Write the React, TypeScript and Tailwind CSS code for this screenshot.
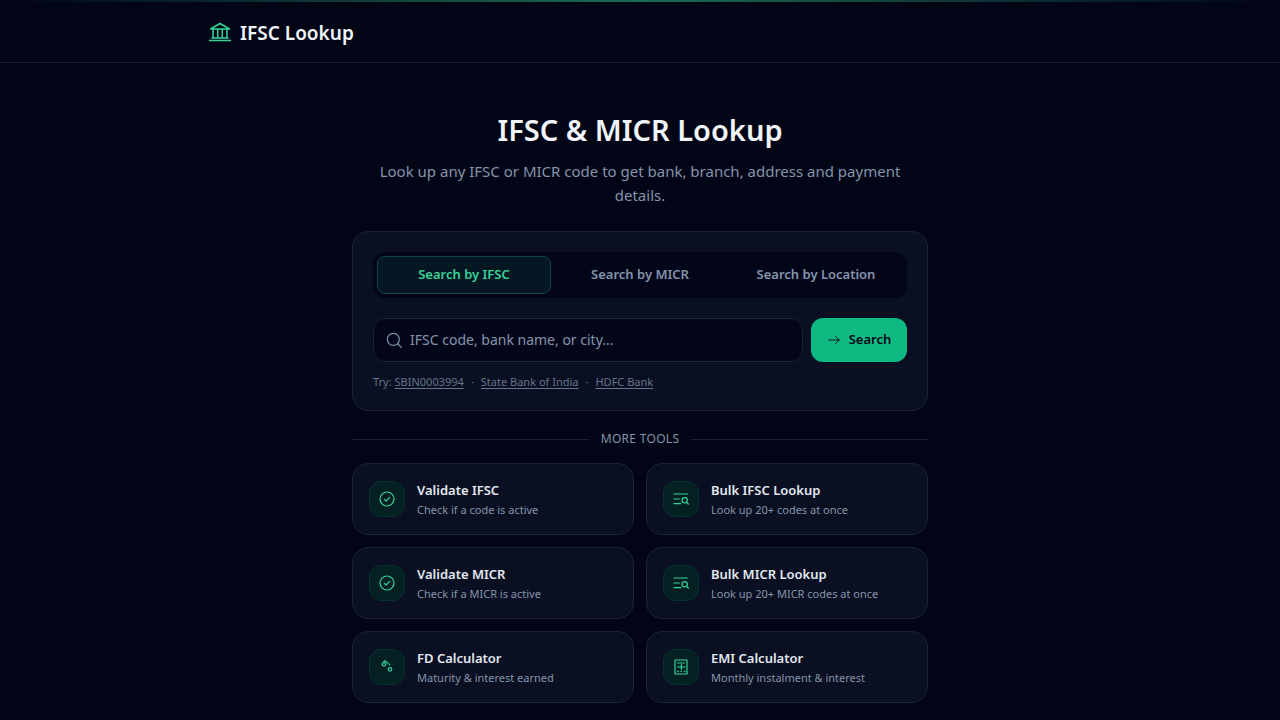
import type { ReactNode } from "react";
import { useState } from "react";

function Icon({ className, width = 1.5, children }: { className: string; width?: number; children: ReactNode }) {
  return (
    <svg
      viewBox="0 0 24 24"
      fill="none"
      stroke="currentColor"
      strokeWidth={width}
      strokeLinecap="round"
      strokeLinejoin="round"
      aria-hidden="true"
      className={className}
    >
      {children}
    </svg>
  );
}

const BankIcon = () => (
  <Icon className="size-6 shrink-0 text-[#34d399]">
    <path d="M2.5 8 12 2.500l9.500 5.500H2.500ZM5 8v9M9.700 8v9M14.300 8v9M19 8v9M4 17h16M1.500 19.500h21" />
  </Icon>
);

const CheckIcon = () => (
  <Icon className="size-4" width={1.8}>
    <circle cx="12" cy="12" r="10.500" />
    <path d="m8 12.500 2.700 2.500L16 9.500" />
  </Icon>
);

const ListSearchIcon = () => (
  <Icon className="size-4" width={1.8}>
    <path d="M1.500 4.500h20M1.500 12h8M1.500 19h10" />
    <circle cx="17.500" cy="14" r="4" />
    <path d="m20.500 17 2.500 2.500" />
  </Icon>
);

const PercentIcon = () => (
  <Icon className="size-4" width={1.8}>
    <circle cx="7.500" cy="8" r="2.700" />
    <circle cx="16.500" cy="15.500" r="2.700" />
    <path d="M7 4.500 9 2.500l7 6" />
  </Icon>
);

const CalculatorIcon = () => (
  <Icon className="size-4" width={1.8}>
    <path d="M3 1.500h18v21H3ZM7 6h10M7 12h11M12.500 8.500v7M7 18.500h1M12 18.500h1M17 18.500h1" />
  </Icon>
);

const tabs = ["Search by IFSC", "Search by MICR", "Search by Location"];
const samples = ["SBIN0003994", "State Bank of India", "HDFC Bank"];

const tools = [
  { title: "Validate IFSC", text: "Check if a code is active", icon: <CheckIcon /> },
  { title: "Bulk IFSC Lookup", text: "Look up 20+ codes at once", icon: <ListSearchIcon /> },
  { title: "Validate MICR", text: "Check if a MICR is active", icon: <CheckIcon /> },
  { title: "Bulk MICR Lookup", text: "Look up 20+ MICR codes at once", icon: <ListSearchIcon /> },
  { title: "FD Calculator", text: "Maturity & interest earned", icon: <PercentIcon /> },
  { title: "EMI Calculator", text: "Monthly instalment & interest", icon: <CalculatorIcon /> },
];

export default function App() {
  const [active, setActive] = useState(0);
  const [query, setQuery] = useState("");

  return (
    <div className="min-h-screen bg-[#020515] font-['Noto_Sans','Open_Sans',sans-serif] text-slate-100">
      <div className="fixed inset-x-0 top-0 h-0.5 bg-linear-to-r from-transparent via-[#34d399]/50 to-transparent" />
      <header className="border-b border-[#1c2434]">
        <div className="mx-auto flex max-w-4xl items-center px-4 pt-[19px] pb-[15px]">
          <a href="#home" className="flex items-center gap-2 text-[19px] leading-7 font-semibold">
            <BankIcon />
            IFSC Lookup
          </a>
        </div>
      </header>

      <main className="mx-auto max-w-xl pt-12 pb-4">
        <h1 className="text-center text-[29px] leading-[38px] font-semibold">IFSC &amp; MICR Lookup</h1>
        <p className="mt-2.5 px-4 text-center text-[15px] leading-6 text-[#8494ab]">
          Look up any IFSC or MICR code to get bank, branch, address and payment details.
        </p>

        <section className="mt-6 rounded-2xl border border-[#1a2233] bg-[#0a1021] p-5">
          <div role="tablist" className="grid grid-cols-3 gap-0.5 rounded-xl bg-[#030619] p-1">
            {tabs.map((tab, i) => (
              <button
                key={tab}
                role="tab"
                type="button"
                aria-selected={i === active}
                onClick={() => setActive(i)}
                className={
                  i === active
                    ? "h-[38px] rounded-lg border border-[#12443f] bg-[#051723] text-[13px] font-semibold text-[#34d399]"
                    : "h-[38px] rounded-lg border border-transparent text-[13px] font-semibold text-[#8494ab]"
                }
              >
                {tab}
              </button>
            ))}
          </div>

          <form className="mt-5 flex gap-2" onSubmit={(e) => e.preventDefault()}>
            <label className="flex h-11 flex-1 items-center gap-2 rounded-xl border border-[#1a2233] bg-[#030619] px-3 text-[#8494ab]">
              <Icon className="size-4 shrink-0" width={1.8}>
                <circle cx="11" cy="11" r="9" />
                <path d="m18 18 5 5" />
              </Icon>
              <input
                type="text"
                value={query}
                onChange={(e) => setQuery(e.target.value)}
                aria-label="Search query"
                placeholder="IFSC code, bank name, or city…"
                className="w-full min-w-0 bg-transparent text-sm text-slate-100 outline-none placeholder:text-[#8494ab]"
              />
            </label>
            <button
              type="submit"
              className="flex h-11 w-24 items-center justify-center gap-2 rounded-xl bg-[#10b981] text-[13px] font-semibold text-slate-950"
            >
              <Icon className="size-3.5">
                <path d="M3 12h18M14.500 5.500 21 12l-6.500 6.500" />
              </Icon>
              Search
            </button>
          </form>

          <p className="mt-3 text-[11px] leading-4 text-[#64748b]">
            Try:{" "}
            {samples.map((sample, i) => (
              <span key={sample}>
                {i > 0 && <span className="mx-[7px]">·</span>}
                <button type="button" className="underline underline-offset-2">
                  {sample}
                </button>
              </span>
            ))}
          </p>
        </section>

        <div className="mt-5 flex items-center gap-3">
          <span className="h-px flex-1 bg-[#1c2434]" />
          <h2 className="text-xs tracking-wide text-[#8494ab] uppercase">More tools</h2>
          <span className="h-px flex-1 bg-[#1c2434]" />
        </div>

        <div className="mt-4 grid grid-cols-2 gap-3">
          {tools.map((tool) => (
            <a
              key={tool.title}
              href="#tool"
              className="flex items-center gap-3 rounded-2xl border border-[#1a2233] bg-[#0a1021] p-4"
            >
              <span className="flex size-9 shrink-0 items-center justify-center rounded-xl border border-[#06312f] bg-[#052023] text-[#34d399]">
                {tool.icon}
              </span>
              <span className="flex flex-col gap-0.5">
                <span className="text-[13px] leading-5 font-semibold text-slate-200">{tool.title}</span>
                <span className="text-[11px] leading-4 text-[#8494ab]">{tool.text}</span>
              </span>
            </a>
          ))}
        </div>
      </main>
    </div>
  );
}
